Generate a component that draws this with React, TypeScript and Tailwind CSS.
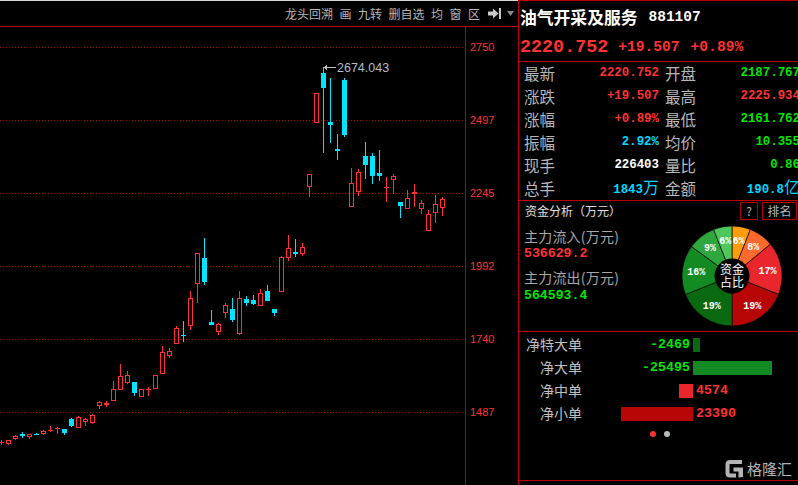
import React from "react";

type C = [string, number, number, number, number];
const candles: C[] = [
  ["r",440,442,443,445],["r",440,440,444,445],["r",435,436,439,440],["c",432,434,436,438],
  ["r",434,434,437,439],["c",433,434,435,435],["r",430,431,434,435],["r",426,430,431,432],
  ["r",427,428,429,434],["c",429,429,433,435],["c",418,419,426,427],["r",416,417,428,428],
  ["r",418,419,422,426],["r",414,415,423,424],["r",401,402,406,409],["r",401,403,405,407],
  ["r",381,389,401,401],["r",364,376,390,390],["r",371,375,383,384],["c",382,382,393,396],
  ["r",389,389,397,397],["r",387,389,390,396],["r",375,375,389,389],["r",346,352,374,374],
  ["r",348,351,356,358],["r",326,328,344,344],["c",321,335,336,342],["r",291,298,326,330],
  ["r",253,253,284,303],["c",238,258,282,285],["c",310,322,325,325],["r",323,324,332,335],
  ["r",303,305,313,318],["c",298,309,320,322],["r",291,298,334,335],["c",296,299,303,306],
  ["c",295,300,304,305],["r",289,293,306,306],["c",285,291,301,301],["c",309,309,313,316],
  ["r",256,257,292,292],["r",235,248,258,261],["c",239,252,254,257],["r",243,247,254,256],
  ["r",174,174,187,197],["r",93,93,123,123],["c",67,73,88,153],["c",78,122,125,143],
  ["c",134,149,151,160],["c",78,80,135,137],["r",168,183,207,207],["r",169,172,192,196],
  ["c",142,156,165,179],["c",153,156,176,184],["c",150,173,176,181],["r",177,187,188,202],
  ["r",174,176,180,194],["c",202,202,206,218],["r",190,198,209,209],["r",184,192,194,207],
  ["r",200,203,209,214],["r",210,214,231,231],["r",195,204,213,223],["r",197,199,208,216],
];

const RED = "#ff3232";
const CYAN = "#00e4ff";

function Candle({ d, i }: { d: C; i: number }) {
  const [k, hi, top, bot, lo] = d;
  const c = 1 + 7 * i;
  const col = k === "r" ? RED : CYAN;
  const doji = bot - top <= 1;
  return (
    <g>
      <rect x={c} y={hi} width={1} height={lo - hi} fill={col} />
      {doji ? (
        <rect x={c - 2} y={top} width={5} height={1} fill={col} />
      ) : k === "r" ? (
        <rect x={c - 1.5} y={top + 0.5} width={4} height={bot - top - 1} fill="#000" stroke={col} strokeWidth={1} />
      ) : (
        <rect x={c - 2} y={top} width={5} height={bot - top} fill={col} />
      )}
    </g>
  );
}

function Chart() {
  return (
    <svg width={465} height={458} viewBox="0 27 465 458" shapeRendering="crispEdges" className="block">
      {[47, 120, 193, 266, 339, 412].map((y) => (
        <line key={y} x1={0} x2={465} y1={y + 0.5} y2={y + 0.5} stroke="#b00000" strokeWidth={1} strokeDasharray="1 2" />
      ))}
      {candles.map((d, i) => (
        <Candle key={i} d={d} i={i} />
      ))}
      <rect x={325} y={67} width={11} height={1} fill="#c0c0c0" />
      <path d="M323 67.5 L327 65 L327 70 Z" fill="#c0c0c0" />
      <text x={337} y={71.5} fontSize={12.5} fill="#b4bcc8" fontFamily="'Liberation Sans',sans-serif" shapeRendering="auto">
        2674.043
      </text>
    </svg>
  );
}

const slices = [
  { p: 6, c: "#ff9c0a" },
  { p: 8, c: "#ff6a2c" },
  { p: 17, c: "#e8262b" },
  { p: 19, c: "#b80606" },
  { p: 19, c: "#0a6a12" },
  { p: 16, c: "#138a22" },
  { p: 9, c: "#2ea83e" },
  { p: 6, c: "#4ec85a" },
];

function Pie() {
  let acc = 0;
  const pt = (a: number, r: number) => {
    const t = (a / 100) * 2 * Math.PI;
    return [50 + r * Math.sin(t), 50 - r * Math.cos(t)];
  };
  return (
    <svg width={100} height={100} viewBox="0 0 100 100" className="block shrink-0">
      {slices.map((s) => {
        const a0 = acc;
        const a1 = acc + s.p;
        acc = a1;
        const [x0, y0] = pt(a0, 50);
        const [x1, y1] = pt(a1, 50);
        const [lx, ly] = pt((a0 + a1) / 2, 36);
        return (
          <g key={a0}>
            <path
              d={`M50 50 L${x0} ${y0} A50 50 0 ${s.p > 50 ? 1 : 0} 1 ${x1} ${y1} Z`}
              fill={s.c}
              stroke="#0a0a0a"
              strokeWidth={0.7}
            />
            <text
              x={lx}
              y={ly + 3.5}
              textAnchor="middle"
              fontSize={10}
              fontWeight={700}
              fill="#fff"
              fontFamily="'Liberation Mono',monospace"
            >
              {s.p}%
            </text>
          </g>
        );
      })}
      <circle cx={50} cy={50} r={17.5} fill="#000" />
      <text x={50} y={47.5} textAnchor="middle" fontSize={12} fill="#fff" fontFamily="'Noto Sans CJK SC',sans-serif">
        资金
      </text>
      <text x={50} y={60.5} textAnchor="middle" fontSize={12} fill="#fff" fontFamily="'Noto Sans CJK SC',sans-serif">
        占比
      </text>
    </svg>
  );
}

const stats: [string, React.ReactNode, string, string, React.ReactNode, string][] = [
  ["最新", "2220.752", "text-[#ff3232]", "开盘", "2187.767", "text-[#00e600]"],
  ["涨跌", "+19.507", "text-[#ff3232]", "最高", "2225.934", "text-[#ff3232]"],
  ["涨幅", "+0.89%", "text-[#ff3232]", "最低", "2161.762", "text-[#00e600]"],
  ["振幅", "2.92%", "text-[#00d8ff]", "均价", "10.355", "text-[#00e600]"],
  ["现手", "226403", "text-white", "量比", "0.86", "text-[#00e600]"],
  [
    "总手",
    <>1843<span className="text-[16px] font-normal">万</span></>,
    "text-[#00d8ff]",
    "金额",
    <>190.8<span className="text-[16px] font-normal">亿</span></>,
    "text-[#00d8ff]",
  ],
];

const CJK = "font-['Noto_Sans_CJK_SC',sans-serif]";
const MONO = "font-['Liberation_Mono','Noto_Sans_CJK_SC',monospace]";

function NetRow({
  label,
  value,
  bar,
  color,
  positive,
}: {
  label: string;
  value: string;
  bar: number;
  color: string;
  positive: boolean;
}) {
  const barEl = <div className={`h-[14px] shrink-0 ${color}`} style={{ width: bar }} />;
  return (
    <div className="flex h-[23px] items-center">
      <div className={`w-[63px] shrink-0 text-right text-[14px] text-[#c0c0c0] ${CJK}`}>{label}</div>
      <div className="flex w-[111px] shrink-0 items-center justify-end gap-[3px]">
        {positive ? (
          barEl
        ) : (
          <span className={`pr-[3px] text-[13.3px] font-bold text-[#00e600] ${MONO}`}>{value}</span>
        )}
      </div>
      <div className="flex items-center">
        {positive ? (
          <span className={`pl-[3px] text-[13.3px] font-bold text-[#ff3232] ${MONO}`}>{value}</span>
        ) : (
          barEl
        )}
      </div>
    </div>
  );
}

export default function App() {
  return (
    <div className="flex h-[485px] w-[798px] overflow-hidden bg-black">
      <div className="flex h-full w-[518px] shrink-0 flex-col">
        <div
          className={`flex h-[27px] shrink-0 items-center justify-end gap-[6.5px] border-t border-b border-t-[#d8d8d8] border-b-[#c00000] pr-[4px] text-[12px] text-[#b8b8b8] ${CJK}`}
        >
          <span>龙头回溯</span>
          <span>画</span>
          <span>九转</span>
          <span>删自选</span>
          <span>均</span>
          <span>窗</span>
          <span>区</span>
          <svg width={13} height={12} viewBox="0 0 13 12" className="ml-[1px] block">
            <path d="M0 3.5H5V0.5L10.5 5.5L5 10.5V7.5H0Z" fill="#c8c8c8" />
            <rect x={11} y={0} width={2} height={11} fill="#c8c8c8" />
          </svg>
          <svg width={7} height={5} viewBox="0 0 7 5" className="block">
            <path d="M0 0H7L3.5 5Z" fill="#8c8c8c" />
          </svg>
        </div>
        <div className="flex min-h-0 flex-1">
          <div className="w-[465px] shrink-0">
            <Chart />
          </div>
          <div className="flex-1 border-l border-[#c00000] pt-[12px] pl-[4px] font-['Liberation_Sans',sans-serif] text-[11px] text-[#ff3232]">
            {["2750", "2497", "2245", "1992", "1740", "1487"].map((t) => (
              <div key={t} className="h-[73px] leading-[16px]">
                {t}
              </div>
            ))}
          </div>
        </div>
      </div>

      <div className="flex h-full w-[280px] shrink-0 flex-col overflow-hidden border-l border-t border-[#c00000]">
        <div className="h-[61px] shrink-0 border-b border-[#c00000] pl-[1px]">
          <div className="flex h-[33px] items-center">
            <span className={`text-[16.8px] font-bold text-white ${CJK}`}>油气开采及服务</span>
            <span className={`ml-[11px] text-[14.5px] font-bold text-white ${MONO}`}>881107</span>
          </div>
          <div className={`flex h-[27px] items-center text-[#ff3232] ${MONO}`}>
            <span className="text-[18.4px] font-bold">2220.752</span>
            <span className="ml-[10px] text-[14.6px] font-bold">+19.507</span>
            <span className="ml-[11px] text-[14.6px] font-bold">+0.89%</span>
          </div>
        </div>

        <div className="h-[139px] shrink-0 border-b border-[#c00000]">
          {stats.map((r) => (
            <div key={r[0]} className="flex h-[23px] items-center pl-[5px] whitespace-nowrap">
              <span className={`w-[32px] shrink-0 text-[15.5px] text-[#b8b8b8] ${CJK}`}>{r[0]}</span>
              <span className={`w-[103px] shrink-0 text-right text-[12.4px] font-bold ${MONO} ${r[2]}`}>{r[1]}</span>
              <span className={`ml-[6px] w-[32px] shrink-0 text-[15.5px] text-[#b8b8b8] ${CJK}`}>{r[3]}</span>
              <span className={`w-[103px] shrink-0 text-right text-[12.4px] font-bold ${MONO} ${r[5]}`}>{r[4]}</span>
            </div>
          ))}
        </div>

        <div className="h-[131px] shrink-0 border-b border-[#c00000]">
          <div className="flex h-[20px] items-center pr-[1px] pl-[6px]">
            <span className={`flex-1 text-[12px] text-[#e0e0e0] ${CJK}`}>资金分析（万元）</span>
            <span className={`flex h-[18px] w-[18px] items-center justify-center border border-[#b00000] text-[12px] text-[#b8b8b8] ${CJK}`}>?</span>
            <span className={`ml-[4px] flex h-[18px] w-[35px] items-center justify-center border border-[#b00000] text-[12px] text-[#b8b8b8] ${CJK}`}>排名</span>
          </div>
          <div className="mt-[5px] flex">
            <div className="w-[163px] shrink-0 pl-[5px]">
              <div className={`h-[20px] text-[14px] leading-[20px] tracking-[0.2px] whitespace-nowrap text-[#a8a8a8] ${CJK}`}>主力流入(万元)</div>
              <div className={`h-[16px] text-[13.2px] leading-[16px] font-bold text-[#ff3232] ${MONO}`}>536629.2</div>
              <div className={`mt-[5px] h-[20px] text-[14px] leading-[20px] tracking-[0.2px] whitespace-nowrap text-[#a8a8a8] ${CJK}`}>主力流出(万元)</div>
              <div className={`mt-[1px] h-[16px] text-[13.2px] leading-[16px] font-bold text-[#00e600] ${MONO}`}>564593.4</div>
            </div>
            <Pie />
          </div>
        </div>

        <div className="relative h-[149px] shrink-0 border-b border-[#c00000] pt-[1px]">
          <NetRow label="净特大单" value="-2469" bar={7} color="bg-[#0a6a12]" positive={false} />
          <NetRow label="净大单" value="-25495" bar={79} color="bg-[#138a22]" positive={false} />
          <NetRow label="净中单" value="4574" bar={14} color="bg-[#e8262b]" positive />
          <NetRow label="净小单" value="23390" bar={72} color="bg-[#b80606]" positive />
          <div className="mt-[6px] ml-[131px] flex gap-2">
            <div className="h-[6px] w-[6px] rounded-full bg-[#ff3232]" />
            <div className="h-[6px] w-[6px] rounded-full bg-[#b8b8b8]" />
          </div>
          <div className="absolute right-[6px] bottom-[2px] flex items-center gap-[3px] text-[#b4b4b4]">
            <svg width={19} height={19} viewBox="0 0 19 19" className="block">
              <path d="M17 3H5Q2.5 3 2.5 5.5V14Q2.5 16.5 5 16.5H11" fill="none" stroke="#b4b4b4" strokeWidth={4} />
              <path d="M8.5 8.5H18V18L13.5 18.5V12.5H8.5Z" fill="#b4b4b4" />
            </svg>
            <span className={`text-[15px] leading-[19px] ${CJK}`}>格隆汇</span>
          </div>
        </div>
      </div>
    </div>
  );
}
